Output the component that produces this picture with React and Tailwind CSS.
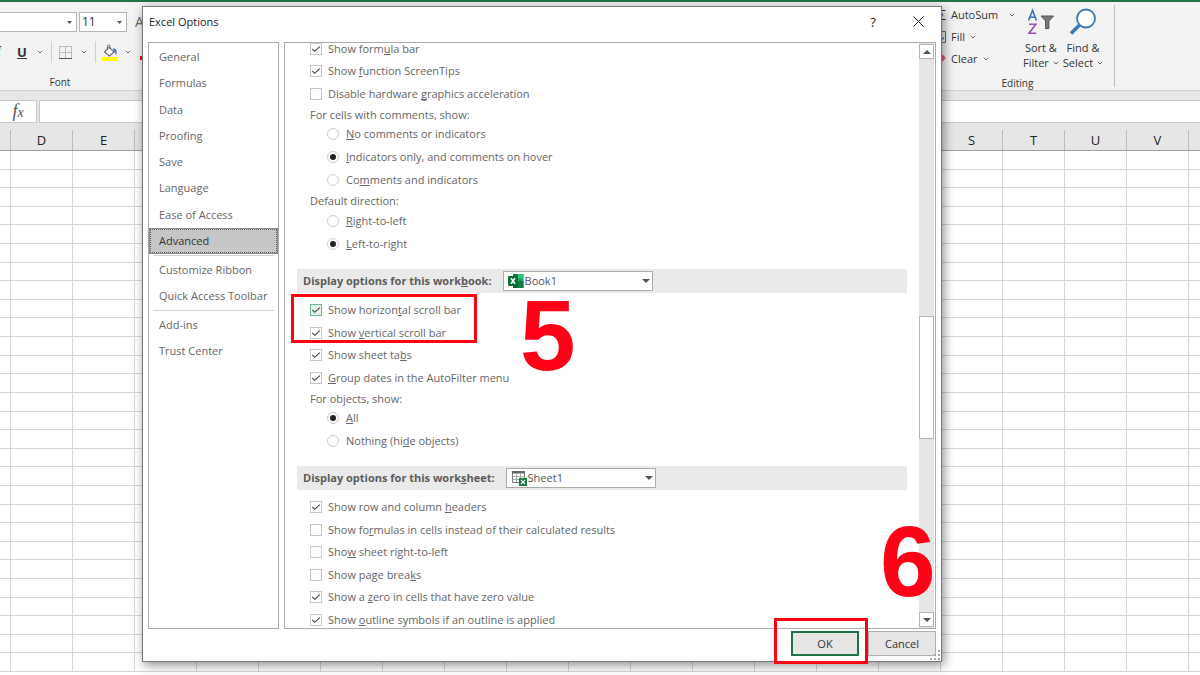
import { useState } from "react"
import clsx from "clsx"

const navGroups = [
  {
    height: "h-[210px]",
    items: ["General", "Formulas", "Data", "Proofing", "Save", "Language", "Ease of Access", "Advanced"],
  },
  { height: "h-[52px]", items: ["Customize Ribbon", "Quick Access Toolbar"] },
  { height: "h-[52px]", items: ["Add-ins", "Trust Center"] },
]

// An underscore marks the access key that follows it
const windowOptions = [
  { label: "Show form_ula bar", checked: true },
  { label: "Show _function ScreenTips", checked: true },
  { label: "Disable hardware _graphics acceleration" },
]

const commentOptions = ["_No comments or indicators", "_Indicators only, and comments on hover", "Co_mments and indicators"]
const directionOptions = ["_Right-to-left", "_Left-to-right"]
const objectOptions = ["_All", "Nothing (hi_de objects)"]

const workbookOptions = [
  { label: "Show horizon_tal scroll bar", checked: true, active: true },
  { label: "Show _vertical scroll bar", checked: true },
  { label: "Show sheet ta_bs", checked: true },
  { label: "_Group dates in the AutoFilter menu", checked: true },
]

const worksheetOptions = [
  { label: "Show row and column _headers", checked: true },
  { label: "Show fo_rmulas in cells instead of their calculated results" },
  { label: "Sho_w sheet right-to-left" },
  { label: "Show page brea_ks" },
  { label: "Show a _zero in cells that have zero value", checked: true },
  { label: "Show _outline symbols if an outline is applied", checked: true },
]

const columns = "DEFGHIJKLMNOPQRSTUVW".split("")
const rows = Array.from({ length: 28 }, (_, i) => i)

const AccessText = ({ text }) => {
  const at = text.indexOf("_")
  if (at < 0) return <span>{text}</span>
  return (
    <span className="whitespace-pre">
      {text.slice(0, at)}
      <u className="underline-offset-1 [text-decoration-skip-ink:none]">{text[at + 1]}</u>
      {text.slice(at + 2)}
    </span>
  )
}

const Chevron = () => (
  <svg width="6" height="4" viewBox="0 0 6 4" className="shrink-0" fill="none" stroke="#666" strokeWidth="1">
    <path d="M0.8 0.8L3 3L5.2 0.8" />
  </svg>
)

const Triangle = ({ up }) => (
  <svg width="8" height="4" viewBox="0 0 8 4" className="shrink-0" fill="#555">
    <path d={up ? "M0 4L4 0L8 4Z" : "M0 0L8 0L4 4Z"} />
  </svg>
)

const CheckRow = ({ label, checked = false, active }) => {
  const [on, setOn] = useState(checked)
  return (
    <label className="flex items-center gap-[6px]">
      <span className="grid h-3 w-3 shrink-0">
        <input
          type="checkbox"
          checked={on}
          onChange={() => setOn(!on)}
          className={clsx(
            "col-start-1 row-start-1 h-3 w-3 appearance-none border",
            active ? "border-[#6fb893] bg-[#e3f3ea]" : "border-[#c6c6c6] bg-white"
          )}
        />
        {on && (
          <svg viewBox="0 0 12 12" className="pointer-events-none col-start-1 row-start-1 h-3 w-3" fill="none" stroke="#444" strokeWidth="1.1">
            <path d="M2.4 6L4.7 8.3L9.8 3.6" />
          </svg>
        )}
      </span>
      <AccessText text={label} />
    </label>
  )
}

const RadioGroup = ({ name, title, options, initial, height }) => {
  const [value, setValue] = useState(initial)
  return (
    <fieldset>
      <legend className="h-[18px] pt-[2px] pl-[13px] leading-4">{title}</legend>
      <div className={clsx("grid auto-rows-fr pl-[30px]", height)}>
        {options.map((option, i) => (
          <label key={option} className="flex items-center gap-[7px]">
            <span className="grid h-3 w-3 shrink-0 place-items-center">
              <input
                type="radio"
                name={name}
                checked={value === i}
                onChange={() => setValue(i)}
                className="col-start-1 row-start-1 h-3 w-3 appearance-none rounded-full border border-[#cccccc] bg-white"
              />
              {value === i && <span className="pointer-events-none col-start-1 row-start-1 h-[6px] w-[6px] rounded-full bg-[#222]" />}
            </span>
            <AccessText text={option} />
          </label>
        ))}
      </div>
    </fieldset>
  )
}

const SectionBand = ({ id, title, option, icon }) => (
  <div className="mt-[14px] mb-[6px] flex h-6 items-center gap-[11px] bg-[#eaeaea] pl-[6px]">
    <label htmlFor={id} className="font-bold text-[#5c5c5c]">
      <AccessText text={title} />
    </label>
    <div className="relative">
      <select id={id} className="block h-5 w-[150px] appearance-none border border-[#ababab] bg-white pl-[21px] text-[11px] leading-4 text-[#555]">
        <option>{option}</option>
      </select>
      <span className="pointer-events-none absolute top-[2px] left-[5px]">{icon}</span>
      <span className="pointer-events-none absolute top-2 right-[3px] flex">
        <Triangle />
      </span>
    </div>
  </div>
)

const WorkbookIcon = () => (
  <svg width="16" height="16" viewBox="0 0 16 16">
    <path d="M5 1H15.5V15H5Z" fill="#21a366" />
    <path d="M5 1H10V8H5Z" fill="#107c41" />
    <path d="M10 1H15.5V5H10Z" fill="#33c481" />
    <path d="M5 8H10V15H5Z" fill="#185c37" />
    <path d="M10 8H15.5V15H10Z" fill="#107c41" />
    <rect x="0" y="3" width="10" height="10" rx="1" fill="#0b7037" />
    <path d="M3 5.2L7 10.8M7 5.2L3 10.8" stroke="#fff" strokeWidth="1.5" />
  </svg>
)

const WorksheetIcon = () => (
  <svg width="16" height="16" viewBox="0 0 16 16">
    <path d="M1.5 1.5H13.5V12.5H1.5Z" fill="#fff" stroke="#777" />
    <path d="M1 1H14V3.5H1Z" fill="#666" />
    <path d="M1.5 6.5H13.5M1.5 9.5H13.5M5.5 3V12M9.5 3V12" stroke="#aaa" />
    <rect x="8" y="8" width="8" height="8" fill="#0f7b3d" />
    <path d="M10 10L14 14M14 10L10 14" stroke="#fff" strokeWidth="1.3" />
  </svg>
)

const Ribbon = () => (
  <div className="flex h-[89px] shrink-0 justify-between border-b border-[#d0d0d0] bg-[#f3f3f3] text-[#333]">
    <div className="flex w-[160px] flex-col pt-[10px]">
      <div className="flex h-[22px] items-center gap-[2px]">
        <button aria-label="Font name" className="flex h-full w-[77px] items-center justify-end border border-l-0 border-[#b5b5b5] bg-white pr-1">
          <svg width="5" height="3" viewBox="0 0 5 3" fill="#555">
            <path d="M0 0H5L2.5 3Z" />
          </svg>
        </button>
        <button className="flex h-full w-12 items-center justify-between border border-[#b5b5b5] bg-white pr-1 pl-[2px] text-xs">
          11
          <svg width="5" height="3" viewBox="0 0 5 3" fill="#555">
            <path d="M0 0H5L2.5 3Z" />
          </svg>
        </button>
        <span className="pl-[6px] text-sm text-[#666]">A</span>
      </div>
      <div className="mt-[9px] flex h-[22px] items-center">
        <span className="w-4 font-serif text-sm leading-4 font-bold italic">
          <span className="-ml-1">I</span>
        </span>
        <button className="w-3 text-[13px] leading-4 font-bold underline">U</button>
        <span className="pl-[9px]">
          <Chevron />
        </span>
        <span className="ml-2 h-[22px] w-px bg-[#cfcfcf]" />
        <svg width="13" height="13" viewBox="0 0 13 13" className="ml-[7px]" fill="none" stroke="#bbb">
          <path d="M0.5 0V12M6.5 0V12M12.5 0V12M0 0.5H13M0 6.5H13" />
          <path d="M0 12.5H13" stroke="#555" />
        </svg>
        <span className="pl-[9px]">
          <Chevron />
        </span>
        <span className="ml-2 h-[22px] w-px bg-[#cfcfcf]" />
        <svg width="16" height="17" viewBox="0 0 16 17" className="ml-[6px]">
          <path d="M7 3.2L12 8L7.5 12L2.5 8Z" fill="#fff" stroke="#666" strokeWidth="1.1" />
          <path d="M5.4 6V2.2C5.4 0.6 8 0.6 8 2.2V5" fill="none" stroke="#666" />
          <path d="M11 4.2C14.5 4.5 15.5 7 14 11.5C13.2 9.5 13 8 11.5 6.8Z" fill="#3a78b5" />
          <rect x="0" y="13" width="16" height="4" fill="#ff0" />
        </svg>
        <span className="pl-[7px]">
          <Chevron />
        </span>
        <span className="mt-3 ml-[9px] h-1 w-4 bg-[#f00]" />
      </div>
      <div className="mt-[11px] w-[120px] text-center text-[10px] leading-4">Font</div>
    </div>

    <div className="mt-[3px] mr-[85px] flex h-[82px] w-[180px] flex-col border-r border-[#bdbdbd]">
      <div className="flex h-[70px] shrink-0 text-[11px] leading-[15px]">
        <div className="flex w-[82px] flex-col pt-[2px]">
          <button className="flex h-[15px] items-center gap-[5px]">
            <span className="w-[11px] text-right text-sm leading-4">Σ</span>
            AutoSum
          </button>
          <button className="mt-[7px] flex h-[15px] items-center gap-[5px]">
            <svg width="11" height="12" viewBox="0 0 11 12" fill="none" stroke="#666">
              <path d="M0.5 0.5H10.5V11.5H0.5Z" />
              <path d="M6 3V9M3 6.5L6 9.5L9 6.5" stroke="#2f75b5" strokeWidth="1.3" />
            </svg>
            Fill
            <Chevron />
          </button>
          <button className="mt-[7px] flex h-[15px] items-center gap-[5px]">
            <svg width="11" height="10" viewBox="0 0 11 10" fill="#e0647c">
              <path d="M0 5L5 0H7L11 4L6 9H4Z" />
            </svg>
            Clear
            <Chevron />
          </button>
        </div>
        <button aria-label="AutoSum menu" className="-ml-2 flex h-5 items-center">
          <Chevron />
        </button>
        <button className="ml-2 flex flex-col items-center pt-[3px]">
          <svg width="28" height="27" viewBox="0 0 28 27" fill="none" className="mb-[5px]">
            <path d="M1.5 12.5L5.5 2.5L9.5 12.5M3 9.3H8" stroke="#3a78b5" strokeWidth="1.6" />
            <path d="M2 16.2H8.8L2 25.2H9.2" stroke="#9a4fb5" strokeWidth="1.6" />
            <path d="M14 8H26.5L21.9 13V20.5H18.6V13Z" fill="#777" stroke="#555" />
          </svg>
          <span>Sort &</span>
          <span className="flex items-center gap-1">
            Filter <Chevron />
          </span>
        </button>
        <button className="ml-1 flex flex-col items-center pt-[3px]">
          <svg width="28" height="27" viewBox="0 0 28 27" fill="none" stroke="#3a78b5" className="mb-[5px]">
            <circle cx="17" cy="10.5" r="9" fill="#fff" strokeWidth="1.8" />
            <path d="M10.5 17L2 25.5" strokeWidth="3.6" />
          </svg>
          <span>Find &</span>
          <span className="flex items-center gap-1">
            Select <Chevron />
          </span>
        </button>
      </div>
      <div className="pr-[14px] text-center text-[10px] leading-4">Editing</div>
    </div>
  </div>
)

const FormulaBar = () => (
  <div className="flex h-[33px] shrink-0 gap-[2px] bg-[#e6e6e6] pt-[9px] pb-px">
    <button className="w-[37px] border border-l-0 border-[#c8c8c8] bg-white font-['Liberation_Serif',serif] text-lg leading-5 text-[#555] italic">
      f<span className="text-sm">x</span>
    </button>
    <input aria-label="Formula bar" className="min-w-0 flex-1 border border-r-0 border-[#c8c8c8] bg-white" />
  </div>
)

const Sheet = () => (
  <div className="flex min-h-0 flex-1 flex-col overflow-hidden">
    <div className="flex h-[27px] shrink-0 items-end border-b border-[#9e9e9e] bg-[#e6e6e6] text-[13px] leading-5 text-[#222]">
      <span className="h-5 w-[11px] shrink-0 border-r border-[#bcbcbc]" />
      {columns.map((column) => (
        <span key={column} className="h-5 w-[62px] shrink-0 border-r border-[#bcbcbc] text-center">
          {column}
        </span>
      ))}
    </div>
    <div className="flex min-h-0 flex-1 flex-col bg-white pb-[3px]">
      {rows.map((row) => (
        <div key={row} className="flex min-h-0 flex-1 border-b border-[#d6d6d6]">
          <span className="w-[11px] shrink-0 border-r border-[#d6d6d6]" />
          {columns.map((column) => (
            <span key={column} className="w-[62px] shrink-0 border-r border-[#d6d6d6]" />
          ))}
        </div>
      ))}
    </div>
  </div>
)

const Sidebar = ({ page, onSelect }) => (
  <nav className="flex w-[131px] shrink-0 flex-col border border-[#ababab] pt-px">
    {navGroups.map((group, g) => (
      <div key={group.items[0]} className="flex flex-col">
        {g > 0 && <hr className="mx-1 my-px border-[#d4d4d4]" />}
        <div className={clsx("grid auto-rows-fr", group.height)}>
          {group.items.map((item) => (
            <button
              key={item}
              onClick={() => onSelect(item)}
              className={clsx(
                "flex items-center border pl-[9px] text-left whitespace-nowrap",
                item === page ? "border-[#8a8a8a] bg-[#c6c6c6] text-[#333] outline-1 -outline-offset-2 outline-[#666] outline-dotted" : "border-transparent"
              )}
            >
              {item}
            </button>
          ))}
        </div>
      </div>
    ))}
  </nav>
)

const Scrollbar = () => (
  <div className="mr-px flex w-[15px] shrink-0 flex-col bg-[#e6e6e6] py-px">
    <button aria-label="Scroll up" className="flex h-[15px] items-center justify-center border border-[#b5b5b5] bg-white">
      <Triangle up />
    </button>
    <div className="flex-[256]" />
    <div className="h-[123px] border border-[#b5b5b5] bg-white" />
    <div className="flex-[173]" />
    <button aria-label="Scroll down" className="flex h-[15px] items-center justify-center border border-[#b5b5b5] bg-white">
      <Triangle />
    </button>
  </div>
)

const OptionsDialog = () => {
  const [page, setPage] = useState("Advanced")

  return (
    <div
      role="dialog"
      aria-label="Excel Options"
      className="absolute top-[6px] left-[142px] flex h-[656px] w-[800px] flex-col border border-[#7a7a7a] bg-white text-[11px] leading-4 text-[#666] shadow-[2px_3px_10px_rgba(0,0,0,0.45)]"
    >
      <div className="flex h-[35px] shrink-0 items-center pb-[6px] pl-[6px] text-[#222]">
        <h1 className="flex-1">Excel Options</h1>
        <button aria-label="Help" className="w-[44px] text-[13px]">
          ?
        </button>
        <button aria-label="Close" className="flex w-[46px] justify-center">
          <svg width="11" height="11" viewBox="0 0 11 11" stroke="#222" strokeWidth="1">
            <path d="M0.5 0.5L10.5 10.5M10.5 0.5L0.5 10.5" />
          </svg>
        </button>
      </div>

      <div className="flex min-h-0 flex-1 gap-[5px] px-[5px]">
        <Sidebar page={page} onSelect={setPage} />
        <div className="flex min-w-0 flex-1 border border-[#ababab]">
          <div className="min-w-0 flex-1 overflow-hidden px-3">
            <div className="-mt-[5px] grid h-[67px] auto-rows-fr pl-[13px]">
              {windowOptions.map((option) => (
                <CheckRow key={option.label} {...option} />
              ))}
            </div>
            <RadioGroup name="comments" title="For cells with comments, show:" options={commentOptions} initial={1} height="h-[68px]" />
            <RadioGroup name="direction" title="Default direction:" options={directionOptions} initial={1} height="h-[46px]" />

            <SectionBand id="workbook" title="Display options for this work_book:" option="Book1" icon={<WorkbookIcon />} />
            <div className="grid h-[90px] auto-rows-fr pl-[13px]">
              {workbookOptions.map((option) => (
                <CheckRow key={option.label} {...option} />
              ))}
            </div>
            <RadioGroup name="objects" title="For objects, show:" options={objectOptions} initial={0} height="h-[45px]" />

            <SectionBand id="worksheet" title="Display options for this work_sheet:" option="Sheet1" icon={<WorksheetIcon />} />
            <div className="grid h-[135px] auto-rows-fr pl-[13px]">
              {worksheetOptions.map((option) => (
                <CheckRow key={option.label} {...option} />
              ))}
            </div>
          </div>
          <Scrollbar />
        </div>
      </div>

      <div className="relative flex h-8 shrink-0 justify-end gap-[9px] px-[5px] pt-[2px] text-[#333]">
        <button className="h-[25px] w-[68px] border-2 border-[#217346] bg-[#e6e6e6]">OK</button>
        <button className="h-[25px] w-[68px] border border-[#b0b0b0] bg-[#e6e6e6]">Cancel</button>
        <svg width="10" height="10" viewBox="0 0 10 10" className="absolute right-px bottom-px" fill="#aaa">
          <path d="M8 0H10V2H8ZM8 4H10V6H8ZM4 4H6V6H4ZM8 8H10V10H8ZM4 8H6V10H4ZM0 8H2V10H0Z" />
        </svg>
      </div>
    </div>
  )
}

const App = () => {
  return (
    <div className="relative flex h-screen flex-col overflow-hidden bg-white font-['Open_Sans',sans-serif]">
      <div className="h-[2px] shrink-0 bg-[#217346]" />
      <Ribbon />
      <FormulaBar />
      <Sheet />
      <OptionsDialog />

      {/* Step markers */}
      <div className="pointer-events-none absolute top-[294px] left-[291px] h-[49px] w-[186px] border-3 border-[#ff0010]" />
      <div className="pointer-events-none absolute top-[618px] left-[774px] h-[46px] w-[94px] border-3 border-[#ff0010]" />
      <span className="pointer-events-none absolute top-[285px] left-[520px] font-['Liberation_Sans',sans-serif] text-[100px] leading-none font-bold text-[#ff0016]">
        5
      </span>
      <span className="pointer-events-none absolute top-[511px] left-[880px] font-['Liberation_Sans',sans-serif] text-[100px] leading-none font-bold text-[#ff0016]">
        6
      </span>
    </div>
  )
}

export default App
